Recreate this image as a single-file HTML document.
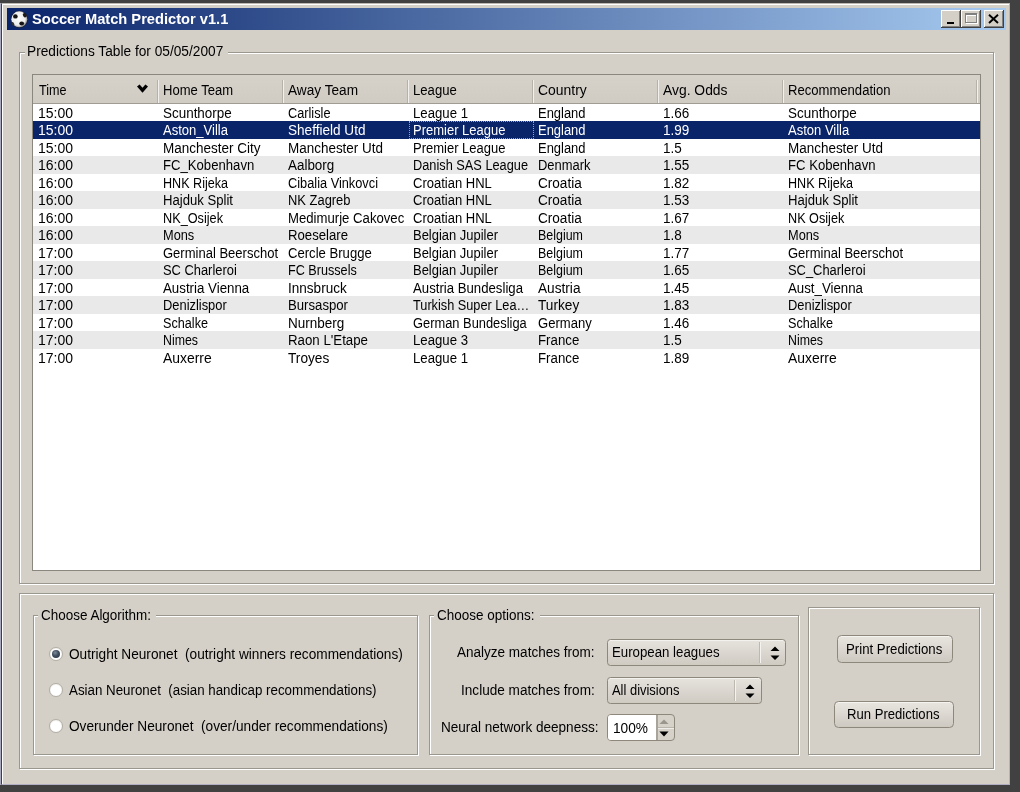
<!DOCTYPE html>
<html>
<head>
<meta charset="utf-8">
<title>Soccer Match Predictor v1.1</title>
<style>
html,body{margin:0;padding:0;}
body{width:1020px;height:792px;overflow:hidden;background:#414141;position:relative;font-family:"Liberation Sans",sans-serif;font-size:14px;color:#000;}
div,span,b,i{box-sizing:border-box;}
.abs{position:absolute;}
#lav{left:0;top:3px;width:1px;height:782px;background:#a9a9bd;}
#win{left:1px;top:3px;width:1009px;height:782px;background:#d4d0c8;border-left:1px solid #404040;border-top:1px solid #bcb9b2;border-bottom:1px solid #b0aec0;}
#winhl{left:2px;top:4px;width:1007px;height:780px;border-left:1px solid #fff;border-top:1px solid #fff;}
#winr{left:1009px;top:3px;width:1px;height:782px;background:#b4b2c0;}
#title{left:7px;top:8px;width:999px;height:22px;background:linear-gradient(90deg,#0a246a 0%,#a6caf0 100%);}
.gb{position:absolute;border:1px solid #9a978f;box-shadow:1px 1px 0 #fff, inset 1px 1px 0 #fff;}
.gbl{position:absolute;background:#d4d0c8;height:4px;}
.t{position:absolute;white-space:nowrap;height:16px;line-height:16px;transform-origin:0 0;}
#tbl{left:32px;top:74px;width:949px;height:497px;background:#fff;border:1px solid #8a877f;}
#hdr{left:33px;top:75px;width:947px;height:28.5px;background:linear-gradient(#d6d2ca,#d0ccc4);border-bottom:1px solid #a09c94;}
.hs{position:absolute;top:79.5px;width:2.4px;height:23px;border-left:1.2px solid #b6b2aa;border-right:1.2px solid #f1f0ec;}
.row{position:absolute;left:33px;width:947px;height:17.5px;}
.alt{background:#e9e9e9;}
.sel{background:#0a246a;}
.tb{position:absolute;top:10px;width:20px;height:17.5px;background:#d4d0c8;box-shadow:inset -1px -1px 0 #404040,inset 1px 1px 0 #fff,inset -2px -2px 0 #808080;}
.radio{position:absolute;width:14px;height:14px;border-radius:50%;background:radial-gradient(circle at 50% 55%,#fff 0,#fff 55%,#f1efec 75%,#e2dfd9 100%);border:1px solid #b4b0a7;box-shadow:0 0 1px #c4c0b8;}
.radio i{position:absolute;left:1.8px;top:1.6px;width:8.4px;height:8.4px;border-radius:50%;background:radial-gradient(circle at 40% 35%,#7d8a99 0,#3f4c5e 45%,#27303f 100%);}
.combo{position:absolute;border:1px solid #8e877c;border-radius:3.5px;background:linear-gradient(#e6e3dd 0,#dbd7d0 50%,#cfcbc3 100%);box-shadow:inset 0 1px 0 #f3f2ee;}
.combo b{position:absolute;top:1.5px;bottom:1.5px;width:2.4px;border-left:1.2px solid #bdb9b1;border-right:1.2px solid #f4f3f0;}
.spin{position:absolute;border:1px solid #8e877c;border-radius:4px;background:#d6d2ca;overflow:hidden;}
.spin .sw{position:absolute;left:0;top:0;width:48.5px;height:100%;background:#fff;}
.spin .sl{position:absolute;left:48.5px;top:0;width:1.5px;height:100%;background:#a8a49b;}
.spin .sh{position:absolute;left:50px;top:12.6px;width:20px;height:1.5px;background:#efede9;border-top:1px solid #b9b5ad;}
.btn{position:absolute;border:1px solid #8e877c;border-radius:4.5px;background:linear-gradient(#e8e5df 0,#dcd8d1 50%,#cdc8c0 100%);box-shadow:inset 0 1px 0 #f5f4f1;}
#all{position:absolute;left:0;top:0;width:1020px;height:792px;filter:blur(0.45px);}
</style>
</head>
<body>
<div id="all">
<div class="abs" id="lav"></div>
<div class="abs" id="win"></div>
<div class="abs" id="winhl"></div>
<div class="abs" id="winr"></div>
<div class="abs" id="title"></div>

<svg class="abs" style="left:10px;top:10px" width="19" height="19" viewBox="0 0 19 19">
<defs><radialGradient id="bg" cx="45%" cy="45%" r="60%"><stop offset="0" stop-color="#fff"/><stop offset="0.7" stop-color="#ececec"/><stop offset="1" stop-color="#777"/></radialGradient></defs>
<circle cx="9.3" cy="9.3" r="8.6" fill="#1a2240"/>
<circle cx="9.3" cy="9.3" r="8" fill="url(#bg)"/>
<ellipse cx="5.4" cy="6.4" rx="2.3" ry="2.2" fill="#151515"/>
<ellipse cx="11.7" cy="13.6" rx="2.4" ry="2" fill="#151515"/>
<ellipse cx="14.8" cy="5.2" rx="1.8" ry="2.3" fill="#1b1b1b" transform="rotate(-35 14.8 5.2)"/>
<ellipse cx="2.9" cy="13.8" rx="1.2" ry="1.9" fill="#333" transform="rotate(-30 2.9 13.8)"/>
</svg>
<div class="t" style="left:31.80px;top:11.45px;transform:scaleX(1.0468);color:#fff;font-weight:bold;">Soccer Match Predictor v1.1</div>
<div class="tb" style="left:941px"><div class="abs" style="left:6px;top:11.5px;width:6.6px;height:2.5px;background:#000"></div></div>
<div class="tb" style="left:961px"><div class="abs" style="left:5px;top:4px;width:11.5px;height:10px;border:1px solid #fff;border-top-width:2px"></div><div class="abs" style="left:4px;top:3px;width:11.5px;height:10px;border:1px solid #808080;border-top-width:2.5px"></div></div>
<div class="tb" style="left:984px"><svg class="abs" style="left:4px;top:3.5px" width="11" height="10" viewBox="0 0 11 10"><path d="M1 0.8 L10 9 M10 0.8 L1 9" stroke="#000" stroke-width="1.9" fill="none"/></svg></div>
<div class="gb" style="left:19px;top:52px;width:975px;height:532px;"></div>
<div class="gbl" style="left:25px;top:51px;width:203.2px"></div>
<div class="t" style="left:26.70px;top:43.15px;transform:scaleX(0.9786);">Predictions Table for 05/05/2007</div>
<div class="abs" id="tbl"></div><div class="abs" id="hdr"></div>
<div class="hs" style="left:156.9px"></div>
<div class="hs" style="left:281.9px"></div>
<div class="hs" style="left:406.9px"></div>
<div class="hs" style="left:531.9px"></div>
<div class="hs" style="left:656.9px"></div>
<div class="hs" style="left:781.9px"></div>
<div class="hs" style="left:975.9px"></div>
<div class="t" style="left:39.00px;top:81.95px;transform:scaleX(0.8989);">Time</div>
<div class="t" style="left:162.90px;top:81.95px;transform:scaleX(0.9306);">Home Team</div>
<div class="t" style="left:287.90px;top:81.95px;transform:scaleX(0.9742);">Away Team</div>
<div class="t" style="left:412.90px;top:81.95px;transform:scaleX(0.9365);">League</div>
<div class="t" style="left:537.90px;top:81.95px;transform:scaleX(0.9945);">Country</div>
<div class="t" style="left:662.90px;top:81.95px;transform:scaleX(0.9906);">Avg. Odds</div>
<div class="t" style="left:787.90px;top:81.95px;transform:scaleX(0.9341);">Recommendation</div>
<svg class="abs" style="left:136px;top:84px" width="13" height="10" viewBox="0 0 13 10"><path d="M1 2.6 L3.6 0.6 L6.5 3.8 L9.4 0.6 L12 2.6 L6.5 8.8 Z" fill="#000"/></svg>
<div class="t" style="left:38.10px;top:104.65px;transform:scaleX(0.9990);">15:00</div>
<div class="t" style="left:162.70px;top:104.65px;transform:scaleX(0.9601);">Scunthorpe</div>
<div class="t" style="left:287.70px;top:104.65px;transform:scaleX(0.9105);">Carlisle</div>
<div class="t" style="left:412.70px;top:104.65px;transform:scaleX(0.9419);">League 1</div>
<div class="t" style="left:537.70px;top:104.65px;transform:scaleX(0.9245);">England</div>
<div class="t" style="left:662.70px;top:104.65px;transform:scaleX(0.9634);">1.66</div>
<div class="t" style="left:787.70px;top:104.65px;transform:scaleX(0.9601);">Scunthorpe</div>
<div class="row sel" style="top:121.3px"></div>
<div class="t" style="left:38.10px;top:122.15px;transform:scaleX(0.9990);color:#fff;">15:00</div>
<div class="t" style="left:162.70px;top:122.15px;transform:scaleX(0.9314);color:#fff;">Aston_Villa</div>
<div class="t" style="left:287.70px;top:122.15px;transform:scaleX(0.9699);color:#fff;">Sheffield Utd</div>
<div class="t" style="left:412.70px;top:122.15px;transform:scaleX(0.9286);color:#fff;">Premier League</div>
<div class="t" style="left:537.70px;top:122.15px;transform:scaleX(0.9245);color:#fff;">England</div>
<div class="t" style="left:662.70px;top:122.15px;transform:scaleX(0.9634);color:#fff;">1.99</div>
<div class="t" style="left:787.70px;top:122.15px;transform:scaleX(0.9295);color:#fff;">Aston Villa</div>
<div class="t" style="left:38.10px;top:139.65px;transform:scaleX(0.9990);">15:00</div>
<div class="t" style="left:162.70px;top:139.65px;transform:scaleX(0.9639);">Manchester City</div>
<div class="t" style="left:287.70px;top:139.65px;transform:scaleX(0.9613);">Manchester Utd</div>
<div class="t" style="left:412.70px;top:139.65px;transform:scaleX(0.9286);">Premier League</div>
<div class="t" style="left:537.70px;top:139.65px;transform:scaleX(0.9245);">England</div>
<div class="t" style="left:662.70px;top:139.65px;transform:scaleX(0.9634);">1.5</div>
<div class="t" style="left:787.70px;top:139.65px;transform:scaleX(0.9613);">Manchester Utd</div>
<div class="row alt" style="top:156.3px"></div>
<div class="t" style="left:38.10px;top:157.15px;transform:scaleX(0.9990);">16:00</div>
<div class="t" style="left:162.70px;top:157.15px;transform:scaleX(0.9379);">FC_Kobenhavn</div>
<div class="t" style="left:287.70px;top:157.15px;transform:scaleX(0.9584);">Aalborg</div>
<div class="t" style="left:412.70px;top:157.15px;transform:scaleX(0.9120);">Danish SAS League</div>
<div class="t" style="left:537.70px;top:157.15px;transform:scaleX(0.9244);">Denmark</div>
<div class="t" style="left:662.70px;top:157.15px;transform:scaleX(0.9634);">1.55</div>
<div class="t" style="left:787.70px;top:157.15px;transform:scaleX(0.9369);">FC Kobenhavn</div>
<div class="t" style="left:38.10px;top:174.65px;transform:scaleX(0.9990);">16:00</div>
<div class="t" style="left:162.70px;top:174.65px;transform:scaleX(0.8984);">HNK Rijeka</div>
<div class="t" style="left:287.70px;top:174.65px;transform:scaleX(0.9130);">Cibalia Vinkovci</div>
<div class="t" style="left:412.70px;top:174.65px;transform:scaleX(0.9285);">Croatian HNL</div>
<div class="t" style="left:537.70px;top:174.65px;transform:scaleX(0.9694);">Croatia</div>
<div class="t" style="left:662.70px;top:174.65px;transform:scaleX(0.9634);">1.82</div>
<div class="t" style="left:787.70px;top:174.65px;transform:scaleX(0.8984);">HNK Rijeka</div>
<div class="row alt" style="top:191.3px"></div>
<div class="t" style="left:38.10px;top:192.15px;transform:scaleX(0.9990);">16:00</div>
<div class="t" style="left:162.70px;top:192.15px;transform:scaleX(0.9370);">Hajduk Split</div>
<div class="t" style="left:287.70px;top:192.15px;transform:scaleX(0.9232);">NK Zagreb</div>
<div class="t" style="left:412.70px;top:192.15px;transform:scaleX(0.9285);">Croatian HNL</div>
<div class="t" style="left:537.70px;top:192.15px;transform:scaleX(0.9694);">Croatia</div>
<div class="t" style="left:662.70px;top:192.15px;transform:scaleX(0.9634);">1.53</div>
<div class="t" style="left:787.70px;top:192.15px;transform:scaleX(0.9370);">Hajduk Split</div>
<div class="t" style="left:38.10px;top:209.65px;transform:scaleX(0.9990);">16:00</div>
<div class="t" style="left:162.70px;top:209.65px;transform:scaleX(0.9073);">NK_Osijek</div>
<div class="t" style="left:287.70px;top:209.65px;transform:scaleX(0.9397);">Medimurje Cakovec</div>
<div class="t" style="left:412.70px;top:209.65px;transform:scaleX(0.9285);">Croatian HNL</div>
<div class="t" style="left:537.70px;top:209.65px;transform:scaleX(0.9694);">Croatia</div>
<div class="t" style="left:662.70px;top:209.65px;transform:scaleX(0.9634);">1.67</div>
<div class="t" style="left:787.70px;top:209.65px;transform:scaleX(0.9038);">NK Osijek</div>
<div class="row alt" style="top:226.3px"></div>
<div class="t" style="left:38.10px;top:227.15px;transform:scaleX(0.9990);">16:00</div>
<div class="t" style="left:162.70px;top:227.15px;transform:scaleX(0.9128);">Mons</div>
<div class="t" style="left:287.70px;top:227.15px;transform:scaleX(0.9402);">Roeselare</div>
<div class="t" style="left:412.70px;top:227.15px;transform:scaleX(0.9255);">Belgian Jupiler</div>
<div class="t" style="left:537.70px;top:227.15px;transform:scaleX(0.8897);">Belgium</div>
<div class="t" style="left:662.70px;top:227.15px;transform:scaleX(0.9634);">1.8</div>
<div class="t" style="left:787.70px;top:227.15px;transform:scaleX(0.9128);">Mons</div>
<div class="t" style="left:38.10px;top:244.65px;transform:scaleX(0.9990);">17:00</div>
<div class="t" style="left:162.70px;top:244.65px;transform:scaleX(0.9295);">Germinal Beerschot</div>
<div class="t" style="left:287.70px;top:244.65px;transform:scaleX(0.9358);">Cercle Brugge</div>
<div class="t" style="left:412.70px;top:244.65px;transform:scaleX(0.9255);">Belgian Jupiler</div>
<div class="t" style="left:537.70px;top:244.65px;transform:scaleX(0.8897);">Belgium</div>
<div class="t" style="left:662.70px;top:244.65px;transform:scaleX(0.9634);">1.77</div>
<div class="t" style="left:787.70px;top:244.65px;transform:scaleX(0.9295);">Germinal Beerschot</div>
<div class="row alt" style="top:261.3px"></div>
<div class="t" style="left:38.10px;top:262.15px;transform:scaleX(0.9990);">17:00</div>
<div class="t" style="left:162.70px;top:262.15px;transform:scaleX(0.9203);">SC Charleroi</div>
<div class="t" style="left:287.70px;top:262.15px;transform:scaleX(0.9018);">FC Brussels</div>
<div class="t" style="left:412.70px;top:262.15px;transform:scaleX(0.9255);">Belgian Jupiler</div>
<div class="t" style="left:537.70px;top:262.15px;transform:scaleX(0.8897);">Belgium</div>
<div class="t" style="left:662.70px;top:262.15px;transform:scaleX(0.9634);">1.65</div>
<div class="t" style="left:787.70px;top:262.15px;transform:scaleX(0.9222);">SC_Charleroi</div>
<div class="t" style="left:38.10px;top:279.65px;transform:scaleX(0.9990);">17:00</div>
<div class="t" style="left:162.70px;top:279.65px;transform:scaleX(0.9498);">Austria Vienna</div>
<div class="t" style="left:287.70px;top:279.65px;transform:scaleX(0.9679);">Innsbruck</div>
<div class="t" style="left:412.70px;top:279.65px;transform:scaleX(0.9423);">Austria Bundesliga</div>
<div class="t" style="left:537.70px;top:279.65px;transform:scaleX(0.9754);">Austria</div>
<div class="t" style="left:662.70px;top:279.65px;transform:scaleX(0.9634);">1.45</div>
<div class="t" style="left:787.70px;top:279.65px;transform:scaleX(0.9477);">Aust_Vienna</div>
<div class="row alt" style="top:296.3px"></div>
<div class="t" style="left:38.10px;top:297.15px;transform:scaleX(0.9990);">17:00</div>
<div class="t" style="left:162.70px;top:297.15px;transform:scaleX(0.9206);">Denizlispor</div>
<div class="t" style="left:287.70px;top:297.15px;transform:scaleX(0.9403);">Bursaspor</div>
<div class="t" style="left:412.70px;top:297.15px;transform:scaleX(0.9091);">Turkish Super Lea…</div>
<div class="t" style="left:537.70px;top:297.15px;transform:scaleX(0.9759);">Turkey</div>
<div class="t" style="left:662.70px;top:297.15px;transform:scaleX(0.9634);">1.83</div>
<div class="t" style="left:787.70px;top:297.15px;transform:scaleX(0.9206);">Denizlispor</div>
<div class="t" style="left:38.10px;top:314.65px;transform:scaleX(0.9990);">17:00</div>
<div class="t" style="left:162.70px;top:314.65px;transform:scaleX(0.9035);">Schalke</div>
<div class="t" style="left:287.70px;top:314.65px;transform:scaleX(0.9637);">Nurnberg</div>
<div class="t" style="left:412.70px;top:314.65px;transform:scaleX(0.9193);">German Bundesliga</div>
<div class="t" style="left:537.70px;top:314.65px;transform:scaleX(0.9336);">Germany</div>
<div class="t" style="left:662.70px;top:314.65px;transform:scaleX(0.9634);">1.46</div>
<div class="t" style="left:787.70px;top:314.65px;transform:scaleX(0.9035);">Schalke</div>
<div class="row alt" style="top:331.3px"></div>
<div class="t" style="left:38.10px;top:332.15px;transform:scaleX(0.9990);">17:00</div>
<div class="t" style="left:162.70px;top:332.15px;transform:scaleX(0.8823);">Nimes</div>
<div class="t" style="left:287.70px;top:332.15px;transform:scaleX(0.9478);">Raon L&#x27;Etape</div>
<div class="t" style="left:412.70px;top:332.15px;transform:scaleX(0.9419);">League 3</div>
<div class="t" style="left:537.70px;top:332.15px;transform:scaleX(0.9467);">France</div>
<div class="t" style="left:662.70px;top:332.15px;transform:scaleX(0.9634);">1.5</div>
<div class="t" style="left:787.70px;top:332.15px;transform:scaleX(0.8823);">Nimes</div>
<div class="t" style="left:38.10px;top:349.65px;transform:scaleX(0.9990);">17:00</div>
<div class="t" style="left:162.70px;top:349.65px;transform:scaleX(0.9944);">Auxerre</div>
<div class="t" style="left:287.70px;top:349.65px;transform:scaleX(0.9759);">Troyes</div>
<div class="t" style="left:412.70px;top:349.65px;transform:scaleX(0.9419);">League 1</div>
<div class="t" style="left:537.70px;top:349.65px;transform:scaleX(0.9467);">France</div>
<div class="t" style="left:662.70px;top:349.65px;transform:scaleX(0.9634);">1.89</div>
<div class="t" style="left:787.70px;top:349.65px;transform:scaleX(0.9944);">Auxerre</div>
<div class="abs" style="left:408.5px;top:121.3px;width:125px;height:17.5px;border:1px dotted rgba(214,208,140,0.75);"></div>
<div class="gb" style="left:19px;top:593px;width:975px;height:176px;"></div>
<div class="gb" style="left:33px;top:615.4px;width:385px;height:139.6px;"></div>
<div class="gbl" style="left:38px;top:614.4px;width:118.0px"></div>
<div class="t" style="left:41.00px;top:607.45px;transform:scaleX(0.9616);">Choose Algorithm:</div>
<div class="gb" style="left:429px;top:615.4px;width:370px;height:139.6px;"></div>
<div class="gbl" style="left:434px;top:614.4px;width:105.5px"></div>
<div class="t" style="left:437.00px;top:607.45px;transform:scaleX(0.9636);">Choose options:</div>
<div class="gb" style="left:808px;top:606.5px;width:172px;height:148.5px;"></div>
<div class="radio" style="left:49.0px;top:647.0px"><i></i></div>
<div class="t" style="left:68.70px;top:645.85px;transform:scaleX(0.9748);">Outright Neuronet &nbsp;(outright winners recommendations)</div>
<div class="radio" style="left:49.0px;top:683.2px"></div>
<div class="t" style="left:68.70px;top:682.05px;transform:scaleX(0.9521);">Asian Neuronet &nbsp;(asian handicap recommendations)</div>
<div class="radio" style="left:49.0px;top:719.4px"></div>
<div class="t" style="left:68.70px;top:718.35px;transform:scaleX(0.9753);">Overunder Neuronet &nbsp;(over/under recommendations)</div>
<div class="t" style="left:457.10px;top:644.45px;transform:scaleX(0.9657);">Analyze matches from:</div>
<div class="t" style="left:460.85px;top:681.75px;transform:scaleX(0.9711);">Include matches from:</div>
<div class="t" style="left:440.50px;top:719.25px;transform:scaleX(0.9683);">Neural network deepness:</div>
<div class="combo" style="left:606.5px;top:639.3px;width:179.2px;height:26.6px"><b style="left:151.5px"></b><svg style="position:absolute;left:162.3px;top:5.4px" width="10" height="15" viewBox="0 0 10 15"><path d="M5 0.6 L9.5 5.1 L0.5 5.1 Z M0.5 9.4 L9.5 9.4 L5 14.1 Z" fill="#000"/></svg></div>
<div class="t" style="left:612.20px;top:644.35px;transform:scaleX(0.9459);">European leagues</div>
<div class="combo" style="left:606.5px;top:677.2px;width:155.0px;height:26.6px"><b style="left:126.6px"></b><svg style="position:absolute;left:137.4px;top:5.4px" width="10" height="15" viewBox="0 0 10 15"><path d="M5 0.6 L9.5 5.1 L0.5 5.1 Z M0.5 9.4 L9.5 9.4 L5 14.1 Z" fill="#000"/></svg></div>
<div class="t" style="left:612.20px;top:681.85px;transform:scaleX(0.9229);">All divisions</div>
<div class="spin" style="left:606.5px;top:713.7px;width:68.6px;height:27.4px"><div class="sw"></div><div class="sl"></div><div class="sh"></div><svg style="position:absolute;left:51.8px;top:3.9px" width="10" height="6" viewBox="0 0 10 6"><path d="M5 0.5 L9.6 5 L0.4 5 Z" fill="#9a968e"/></svg><svg style="position:absolute;left:51.8px;top:16.8px" width="10" height="6" viewBox="0 0 10 6"><path d="M0.4 0.6 L9.6 0.6 L5 5.4 Z" fill="#000"/></svg></div>
<div class="t" style="left:612.60px;top:719.85px;transform:scaleX(0.9775);">100%</div>
<div class="btn" style="left:836.8px;top:635.3px;width:116.2px;height:27.3px"></div>
<div class="t" style="left:845.60px;top:640.65px;transform:scaleX(0.9442);">Print Predictions</div>
<div class="btn" style="left:834.2px;top:700.5px;width:119.8px;height:27.2px"></div>
<div class="t" style="left:846.80px;top:705.55px;transform:scaleX(0.9359);">Run Predictions</div>
</div></body></html>
